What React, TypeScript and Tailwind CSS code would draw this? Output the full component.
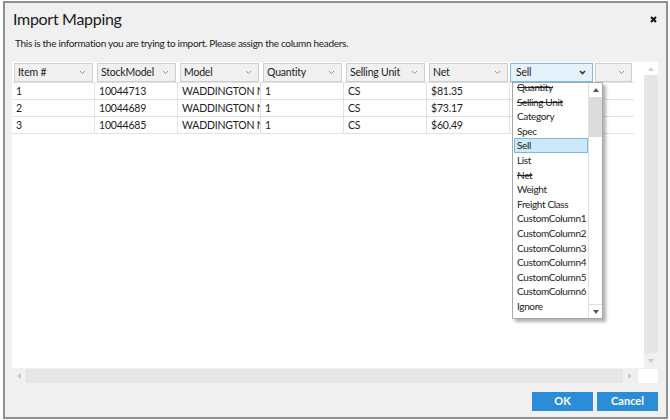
import React from 'react';

const columns = ['Item #', 'StockModel', 'Model', 'Quantity', 'Selling Unit', 'Net', 'Sell', ''];

const rows = [
  ['1', '10044713', 'WADDINGTON NORTH AMERICA', '1', 'CS', '$81.35'],
  ['2', '10044689', 'WADDINGTON NORTH AMERICA', '1', 'CS', '$73.17'],
  ['3', '10044685', 'WADDINGTON NORTH AMERICA', '1', 'CS', '$60.49'],
];

const options = [
  { label: 'Quantity', used: true },
  { label: 'Selling Unit', used: true },
  { label: 'Category' },
  { label: 'Spec' },
  { label: 'Sell', active: true },
  { label: 'List' },
  { label: 'Net', used: true },
  { label: 'Weight' },
  { label: 'Freight Class' },
  { label: 'CustomColumn1' },
  { label: 'CustomColumn2' },
  { label: 'CustomColumn3' },
  { label: 'CustomColumn4' },
  { label: 'CustomColumn5' },
  { label: 'CustomColumn6' },
  { label: 'Ignore' },
];

const Chevron = ({ dark }: { dark?: boolean }) => (
  <svg width="7" height="5" viewBox="0 0 7 5" className="shrink-0">
    <polyline
      points="1,1 3.5,3.5 6,1"
      fill="none"
      stroke={dark ? '#333' : '#9a9a9a'}
      strokeWidth={dark ? 1.6 : 1}
    />
  </svg>
);

const Arrow = ({ dir, color = '#b5b5b5' }: { dir: 'up' | 'down' | 'left' | 'right'; color?: string }) => {
  const pts = {
    up: '0,4 3,0 6,4',
    down: '0,0 3,4 6,0',
    left: '4,0 0,3 4,6',
    right: '0,0 4,3 0,6',
  }[dir];
  const w = dir === 'up' || dir === 'down' ? 6 : 4;
  const h = dir === 'up' || dir === 'down' ? 4 : 6;
  return (
    <svg width={w} height={h} viewBox={`0 0 ${w} ${h}`}>
      <polygon points={pts} fill={color} />
    </svg>
  );
};

export default function App() {
  return (
    <div className="w-[670px] h-[420px] bg-white font-['Lato','Open_Sans',sans-serif] text-[#222]">
      <div className="relative ml-[3px] mt-[1px] w-[665px] h-[418px] border-2 border-[#8f8f8f] bg-[#f0f0f0] flex flex-col">
        {/* title bar */}
        <div className="flex items-start justify-between pl-[8px] pr-[8px] pt-[5px] h-[30px]">
          <h1 className="text-[16px] tracking-[-0.3px] leading-[22px] text-[#1a1a1a]">Import Mapping</h1>
          <svg width="7" height="7" viewBox="0 0 7 7" className="mt-[8px] mr-[1px]">
            <path d="M1 1 L6 6 M6 1 L1 6" stroke="#111" strokeWidth="2" />
          </svg>
        </div>
        <p className="pl-[10px] text-[10px] tracking-[-0.3px] leading-[14px] text-[#222] mt-[3px]">
          This is the information you are trying to import. Please assign the column headers.
        </p>

        {/* grid */}
        <div className="ml-[7px] mt-[12px] w-[646px] flex flex-col">
          <div className="flex h-[306px]">
            <div className="flex-1 bg-white overflow-hidden">
              <div className="flex h-[20px] pt-[1px]">
                {columns.map((c, i) => (
                  <div key={i} className={`${i === 7 ? 'w-[41px]' : 'w-[83px]'} px-[2px] shrink-0`}>
                    {c === 'Sell' ? (
                      <div className="h-[19px] -mx-[2px] border border-[#7fbde6] bg-[#e5f1fb] flex items-center justify-between pl-[5px] pr-[6px] text-[10.5px] tracking-[-0.2px]">
                        <span>Sell</span>
                        <Chevron dark />
                      </div>
                    ) : (
                      <div className="h-[19px] border border-[#cfcfcf] bg-[#f0f0f0] flex items-center justify-between pl-[3px] pr-[6px] text-[10.5px] tracking-[-0.2px]">
                        <span>{c}</span>
                        <Chevron />
                      </div>
                    )}
                  </div>
                ))}
              </div>
              <div className="w-[622px] border-t border-[#e2e2e2]">
                {rows.map((r, ri) => (
                  <div key={ri} className="flex h-[17px] border-b border-[#e2e2e2] text-[10.5px] tracking-[-0.2px] leading-[16px]">
                    {r.map((v, ci) => (
                      <div
                        key={ci}
                        className="w-[83px] shrink-0 pl-[4px] border-r border-[#e2e2e2] whitespace-nowrap overflow-hidden"
                      >
                        {v}
                      </div>
                    ))}
                    <div className="w-[83px] shrink-0 border-r border-[#e2e2e2]" />
                    <div className="flex-1" />
                  </div>
                ))}
              </div>
            </div>
            {/* vertical scrollbar */}
            <div className="w-[14px] flex flex-col">
              <div className="h-[13px] bg-white flex items-center justify-center">
                <Arrow dir="up" color="#d0d0d0" />
              </div>
              <div className="flex-1 bg-[#e6e6e6]" />
              <div className="h-[15px] bg-[#f0f0f0] flex items-center justify-center">
                <Arrow dir="down" color="#c8c8c8" />
              </div>
            </div>
          </div>
          {/* horizontal scrollbar */}
          <div className="flex h-[14px] mt-[1px]">
            <div className="w-[14px] flex items-center justify-center bg-[#f0f0f0]">
              <Arrow dir="left" color="#c8c8c8" />
            </div>
            <div className="w-[597px] bg-[#e6e6e6]" />
            <div className="w-[14px] flex items-center justify-center bg-[#f0f0f0]">
              <Arrow dir="right" color="#c8c8c8" />
            </div>
            <div className="flex-1 bg-white ml-[1px]" />
          </div>
        </div>

        {/* buttons */}
        <div className="flex justify-end gap-[4px] pr-[8px] mt-[9px]">
          <button className="w-[61px] h-[19px] bg-[#2b8cd8] text-white text-[11px] font-bold">OK</button>
          <button className="w-[61px] h-[19px] bg-[#2b8cd8] text-white text-[11px] font-bold">Cancel</button>
        </div>

        {/* open dropdown */}
        <div className="absolute left-[507px] top-[79px] w-[91px] h-[237px] bg-white border border-[#a8a8a8] shadow-[3px_3px_3px_rgba(0,0,0,0.3)] flex overflow-hidden">
          <div className="flex-1 min-w-0 overflow-hidden">
            <div className="-mt-[3px] pl-[1px]">
              {options.map((o) => (
                <div
                  key={o.label}
                  className={`h-[14.6px] pl-[2px] text-[10px] tracking-[-0.35px] leading-[13px] whitespace-nowrap ${
                    o.active ? 'bg-[#cde8f8] border border-[#7ab9e3]' : 'border border-transparent'
                  } ${o.used ? 'line-through' : ''}`}
                >
                  {o.label}
                </div>
              ))}
            </div>
          </div>
          <div className="w-[14px] shrink-0 flex flex-col border-l border-[#e0e0e0]">
            <div className="h-[15px] bg-white border-b border-[#dcdcdc] flex items-center justify-center">
              <Arrow dir="up" color="#555" />
            </div>
            <div className="h-[39px] bg-[#dcdcdc]" />
            <div className="flex-1 bg-white" />
            <div className="h-[14px] bg-white border-t border-[#dcdcdc] flex items-center justify-center">
              <Arrow dir="down" color="#555" />
            </div>
          </div>
        </div>
      </div>
    </div>
  );
}
